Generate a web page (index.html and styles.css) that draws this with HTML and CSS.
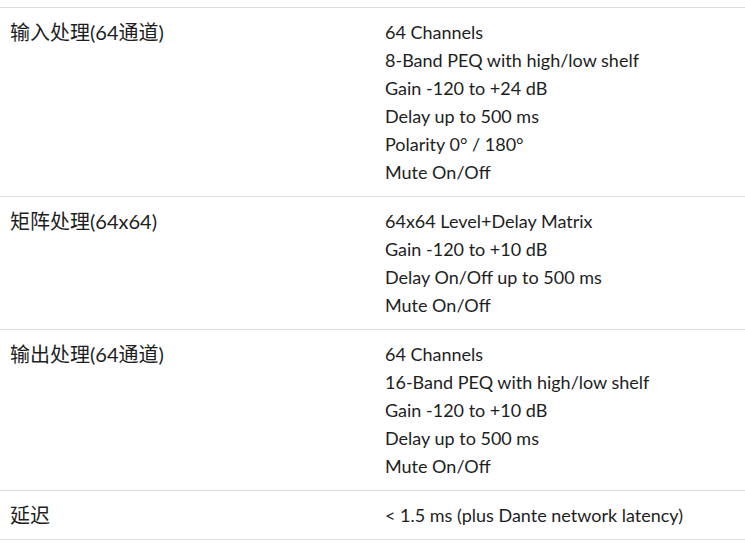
FILE: index.html
```html
<!DOCTYPE html>
<html lang="zh">
<head>
<meta charset="utf-8">
<link rel="stylesheet" href="styles.css">
</head>
<body>
<table class="spec">
  <tbody>
    <tr>
      <td class="label">输入处理(64通道)</td>
      <td class="value">64 Channels<br>8-Band PEQ with high/low shelf<br>Gain -120 to +24 dB<br>Delay up to 500 ms<br>Polarity 0° / 180°<br>Mute On/Off</td>
    </tr>
    <tr>
      <td class="label">矩阵处理(64x64)</td>
      <td class="value">64x64 Level+Delay Matrix<br>Gain -120 to +10 dB<br>Delay On/Off up to 500 ms<br>Mute On/Off</td>
    </tr>
    <tr>
      <td class="label">输出处理(64通道)</td>
      <td class="value">64 Channels<br>16-Band PEQ with high/low shelf<br>Gain -120 to +10 dB<br>Delay up to 500 ms<br>Mute On/Off</td>
    </tr>
    <tr>
      <td class="label">延迟</td>
      <td class="value">&lt; 1.5 ms (plus Dante network latency)</td>
    </tr>
  </tbody>
</table>
</body>
</html>
```

FILE: styles.css
```css
html, body {
  margin: 0;
  padding: 0;
  background: #fff;
}
body {
  padding-top: 7px;
  font-family: "Lato", "Noto Sans CJK SC", sans-serif;
  font-size: 18px;
  color: #1e1e1e;
}
.spec {
  width: 100%;
  border-collapse: collapse;
}
.spec td {
  border-top: 1px solid #dedede;
  border-bottom: 1px solid #dedede;
  padding: 10px 0;
  line-height: 28px;
  vertical-align: top;
}
.spec .label {
  width: 385px;
  padding-left: 10px;
  box-sizing: border-box;
  font-size: 20px;
}
.spec .value {
  padding-left: 0;
}
```
